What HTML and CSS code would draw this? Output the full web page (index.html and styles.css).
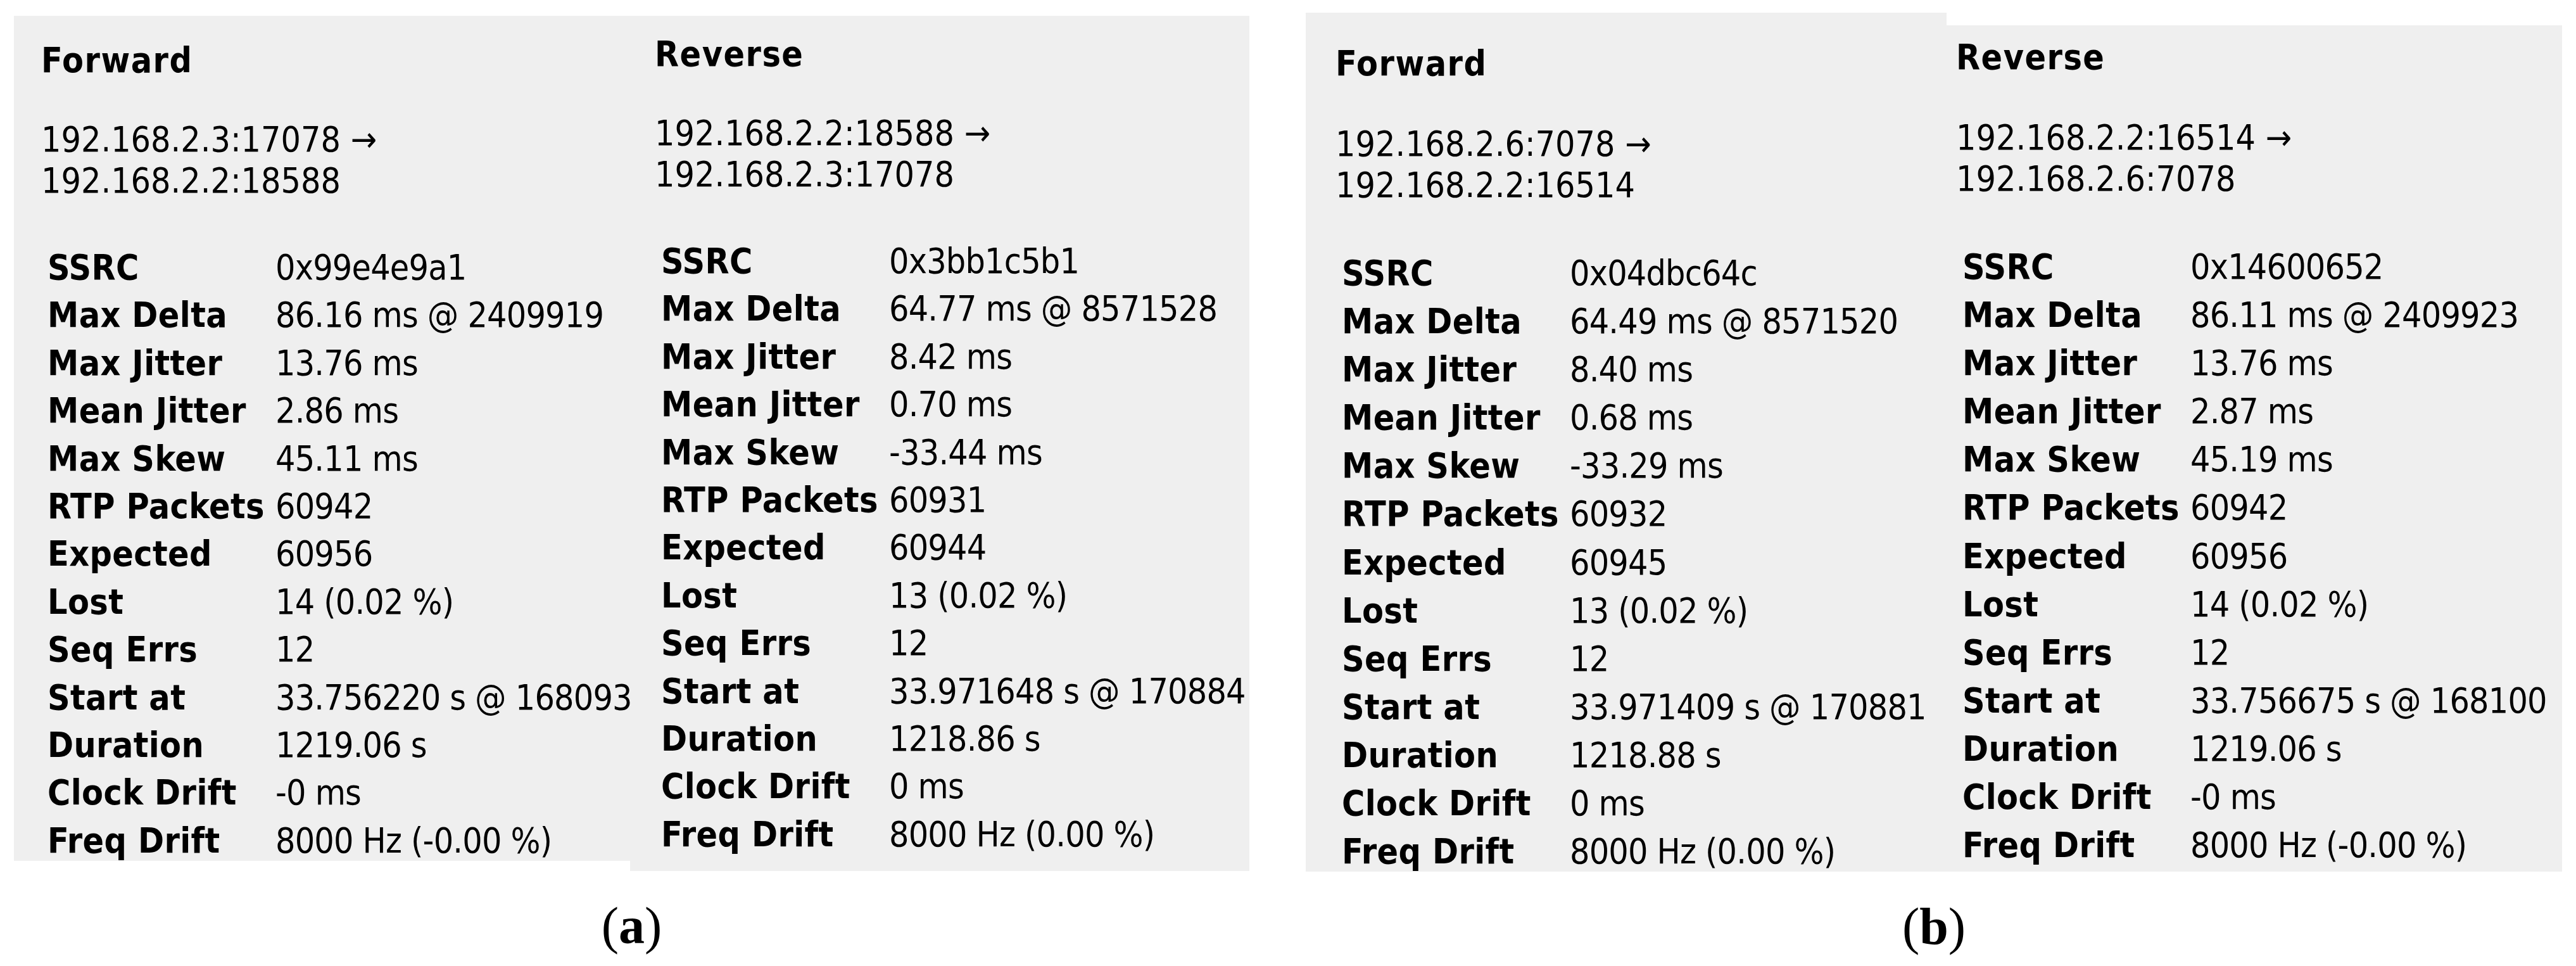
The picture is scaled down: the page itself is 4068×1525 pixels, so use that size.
FILE: index.html
```html
<!DOCTYPE html>
<html lang="en">
<head>
<meta charset="utf-8">
<title>RTP Stream Analysis</title>
<link rel="stylesheet" href="styles.css">
</head>
<body>
<div class="page">
  <figure class="fig fig-a">
    <div class="panels">
      <section class="panel panel-a1">
        <h2 class="dir">Forward</h2>
        <p class="addr">192.168.2.3:17078 →<br>192.168.2.2:18588</p>
        <dl class="stats">
          <dt>SSRC</dt><dd>0x99e4e9a1</dd>
          <dt>Max Delta</dt><dd>86.16 ms @ 2409919</dd>
          <dt>Max Jitter</dt><dd>13.76 ms</dd>
          <dt>Mean Jitter</dt><dd>2.86 ms</dd>
          <dt>Max Skew</dt><dd>45.11 ms</dd>
          <dt>RTP Packets</dt><dd>60942</dd>
          <dt>Expected</dt><dd>60956</dd>
          <dt>Lost</dt><dd>14 (0.02 %)</dd>
          <dt>Seq Errs</dt><dd>12</dd>
          <dt>Start at</dt><dd>33.756220 s @ 168093</dd>
          <dt>Duration</dt><dd>1219.06 s</dd>
          <dt>Clock Drift</dt><dd>-0 ms</dd>
          <dt>Freq Drift</dt><dd>8000 Hz (-0.00 %)</dd>
        </dl>
      </section>
      <section class="panel panel-a2">
        <h2 class="dir">Reverse</h2>
        <p class="addr">192.168.2.2:18588 →<br>192.168.2.3:17078</p>
        <dl class="stats">
          <dt>SSRC</dt><dd>0x3bb1c5b1</dd>
          <dt>Max Delta</dt><dd>64.77 ms @ 8571528</dd>
          <dt>Max Jitter</dt><dd>8.42 ms</dd>
          <dt>Mean Jitter</dt><dd>0.70 ms</dd>
          <dt>Max Skew</dt><dd>-33.44 ms</dd>
          <dt>RTP Packets</dt><dd>60931</dd>
          <dt>Expected</dt><dd>60944</dd>
          <dt>Lost</dt><dd>13 (0.02 %)</dd>
          <dt>Seq Errs</dt><dd>12</dd>
          <dt>Start at</dt><dd>33.971648 s @ 170884</dd>
          <dt>Duration</dt><dd>1218.86 s</dd>
          <dt>Clock Drift</dt><dd>0 ms</dd>
          <dt>Freq Drift</dt><dd>8000 Hz (0.00 %)</dd>
        </dl>
      </section>
    </div>
    <figcaption class="cap">(<b>a</b>)</figcaption>
  </figure>

  <figure class="fig fig-b">
    <div class="panels">
      <section class="panel panel-b1">
        <h2 class="dir">Forward</h2>
        <p class="addr">192.168.2.6:7078 →<br>192.168.2.2:16514</p>
        <dl class="stats">
          <dt>SSRC</dt><dd>0x04dbc64c</dd>
          <dt>Max Delta</dt><dd>64.49 ms @ 8571520</dd>
          <dt>Max Jitter</dt><dd>8.40 ms</dd>
          <dt>Mean Jitter</dt><dd>0.68 ms</dd>
          <dt>Max Skew</dt><dd>-33.29 ms</dd>
          <dt>RTP Packets</dt><dd>60932</dd>
          <dt>Expected</dt><dd>60945</dd>
          <dt>Lost</dt><dd>13 (0.02 %)</dd>
          <dt>Seq Errs</dt><dd>12</dd>
          <dt>Start at</dt><dd>33.971409 s @ 170881</dd>
          <dt>Duration</dt><dd>1218.88 s</dd>
          <dt>Clock Drift</dt><dd>0 ms</dd>
          <dt>Freq Drift</dt><dd>8000 Hz (0.00 %)</dd>
        </dl>
      </section>
      <section class="panel panel-b2">
        <h2 class="dir">Reverse</h2>
        <p class="addr">192.168.2.2:16514 →<br>192.168.2.6:7078</p>
        <dl class="stats">
          <dt>SSRC</dt><dd>0x14600652</dd>
          <dt>Max Delta</dt><dd>86.11 ms @ 2409923</dd>
          <dt>Max Jitter</dt><dd>13.76 ms</dd>
          <dt>Mean Jitter</dt><dd>2.87 ms</dd>
          <dt>Max Skew</dt><dd>45.19 ms</dd>
          <dt>RTP Packets</dt><dd>60942</dd>
          <dt>Expected</dt><dd>60956</dd>
          <dt>Lost</dt><dd>14 (0.02 %)</dd>
          <dt>Seq Errs</dt><dd>12</dd>
          <dt>Start at</dt><dd>33.756675 s @ 168100</dd>
          <dt>Duration</dt><dd>1219.06 s</dd>
          <dt>Clock Drift</dt><dd>-0 ms</dd>
          <dt>Freq Drift</dt><dd>8000 Hz (-0.00 %)</dd>
        </dl>
      </section>
    </div>
    <figcaption class="cap">(<b>b</b>)</figcaption>
  </figure>
</div>
</body>
</html>
```

FILE: styles.css
```css
html, body {
  margin: 0;
  padding: 0;
  background: #ffffff;
}

.page {
  display: flex;
  align-items: flex-start;
  padding-left: 22px;
  width: 4068px;
  height: 1525px;
  box-sizing: border-box;
}

.fig {
  margin: 0;
  display: flex;
  flex-direction: column;
}

.fig-a {
  width: 1951px;
}

.fig-b {
  width: 1984px;
  margin-left: 89px;
}

.panels {
  display: flex;
  align-items: flex-start;
}

.panel {
  background: #efefef;
  box-sizing: border-box;
  overflow: hidden;
  color: #000;
  font-family: "DejaVu Sans Condensed", "DejaVu Sans", sans-serif;
  font-stretch: condensed;
  font-size: 55px;
  white-space: nowrap;
}

.dir {
  margin: 0;
  font-size: 55px;
  font-weight: bold;
  line-height: 65px;
  letter-spacing: 1.5px;
}

.addr {
  margin: 0;
  line-height: 65px;
}

.stats {
  display: grid;
  grid-template-columns: 360px auto;
  margin: 0 0 0 10px;
  line-height: 75.4px;
}

.stats dt {
  font-weight: bold;
  letter-spacing: 0.4px;
}

.stats dd {
  margin: 0;
  letter-spacing: -0.8px;
}

/* individual screenshot crops */
.panel-a1 {
  width: 973px;
  height: 1334px;
  margin-top: 25px;
  padding: 38px 0 0 43px;
}

.panel-a2 {
  width: 978px;
  height: 1350px;
  margin-top: 25px;
  padding: 28px 0 0 39px;
}

.panel-b1 {
  width: 1012px;
  height: 1356px;
  margin-top: 20px;
  padding: 48px 0 0 47px;
}

.panel-b2 {
  width: 972px;
  height: 1336px;
  margin-top: 40px;
  padding: 18px 0 0 15px;
}

.fig-a .dir {
  margin-bottom: 60px;
}

.fig-a .addr {
  margin-bottom: 67px;
}

.fig-b .dir {
  margin-bottom: 62px;
}

.fig-b .addr {
  margin-bottom: 68px;
}

.fig-b .stats {
  line-height: 76.1px;
}

.cap {
  margin-top: 37px;
  text-align: center;
  font-family: "Liberation Serif", "Times New Roman", serif;
  font-size: 82px;
  line-height: 100px;
  color: #000;
}

.cap b {
  font-weight: bold;
}
```
